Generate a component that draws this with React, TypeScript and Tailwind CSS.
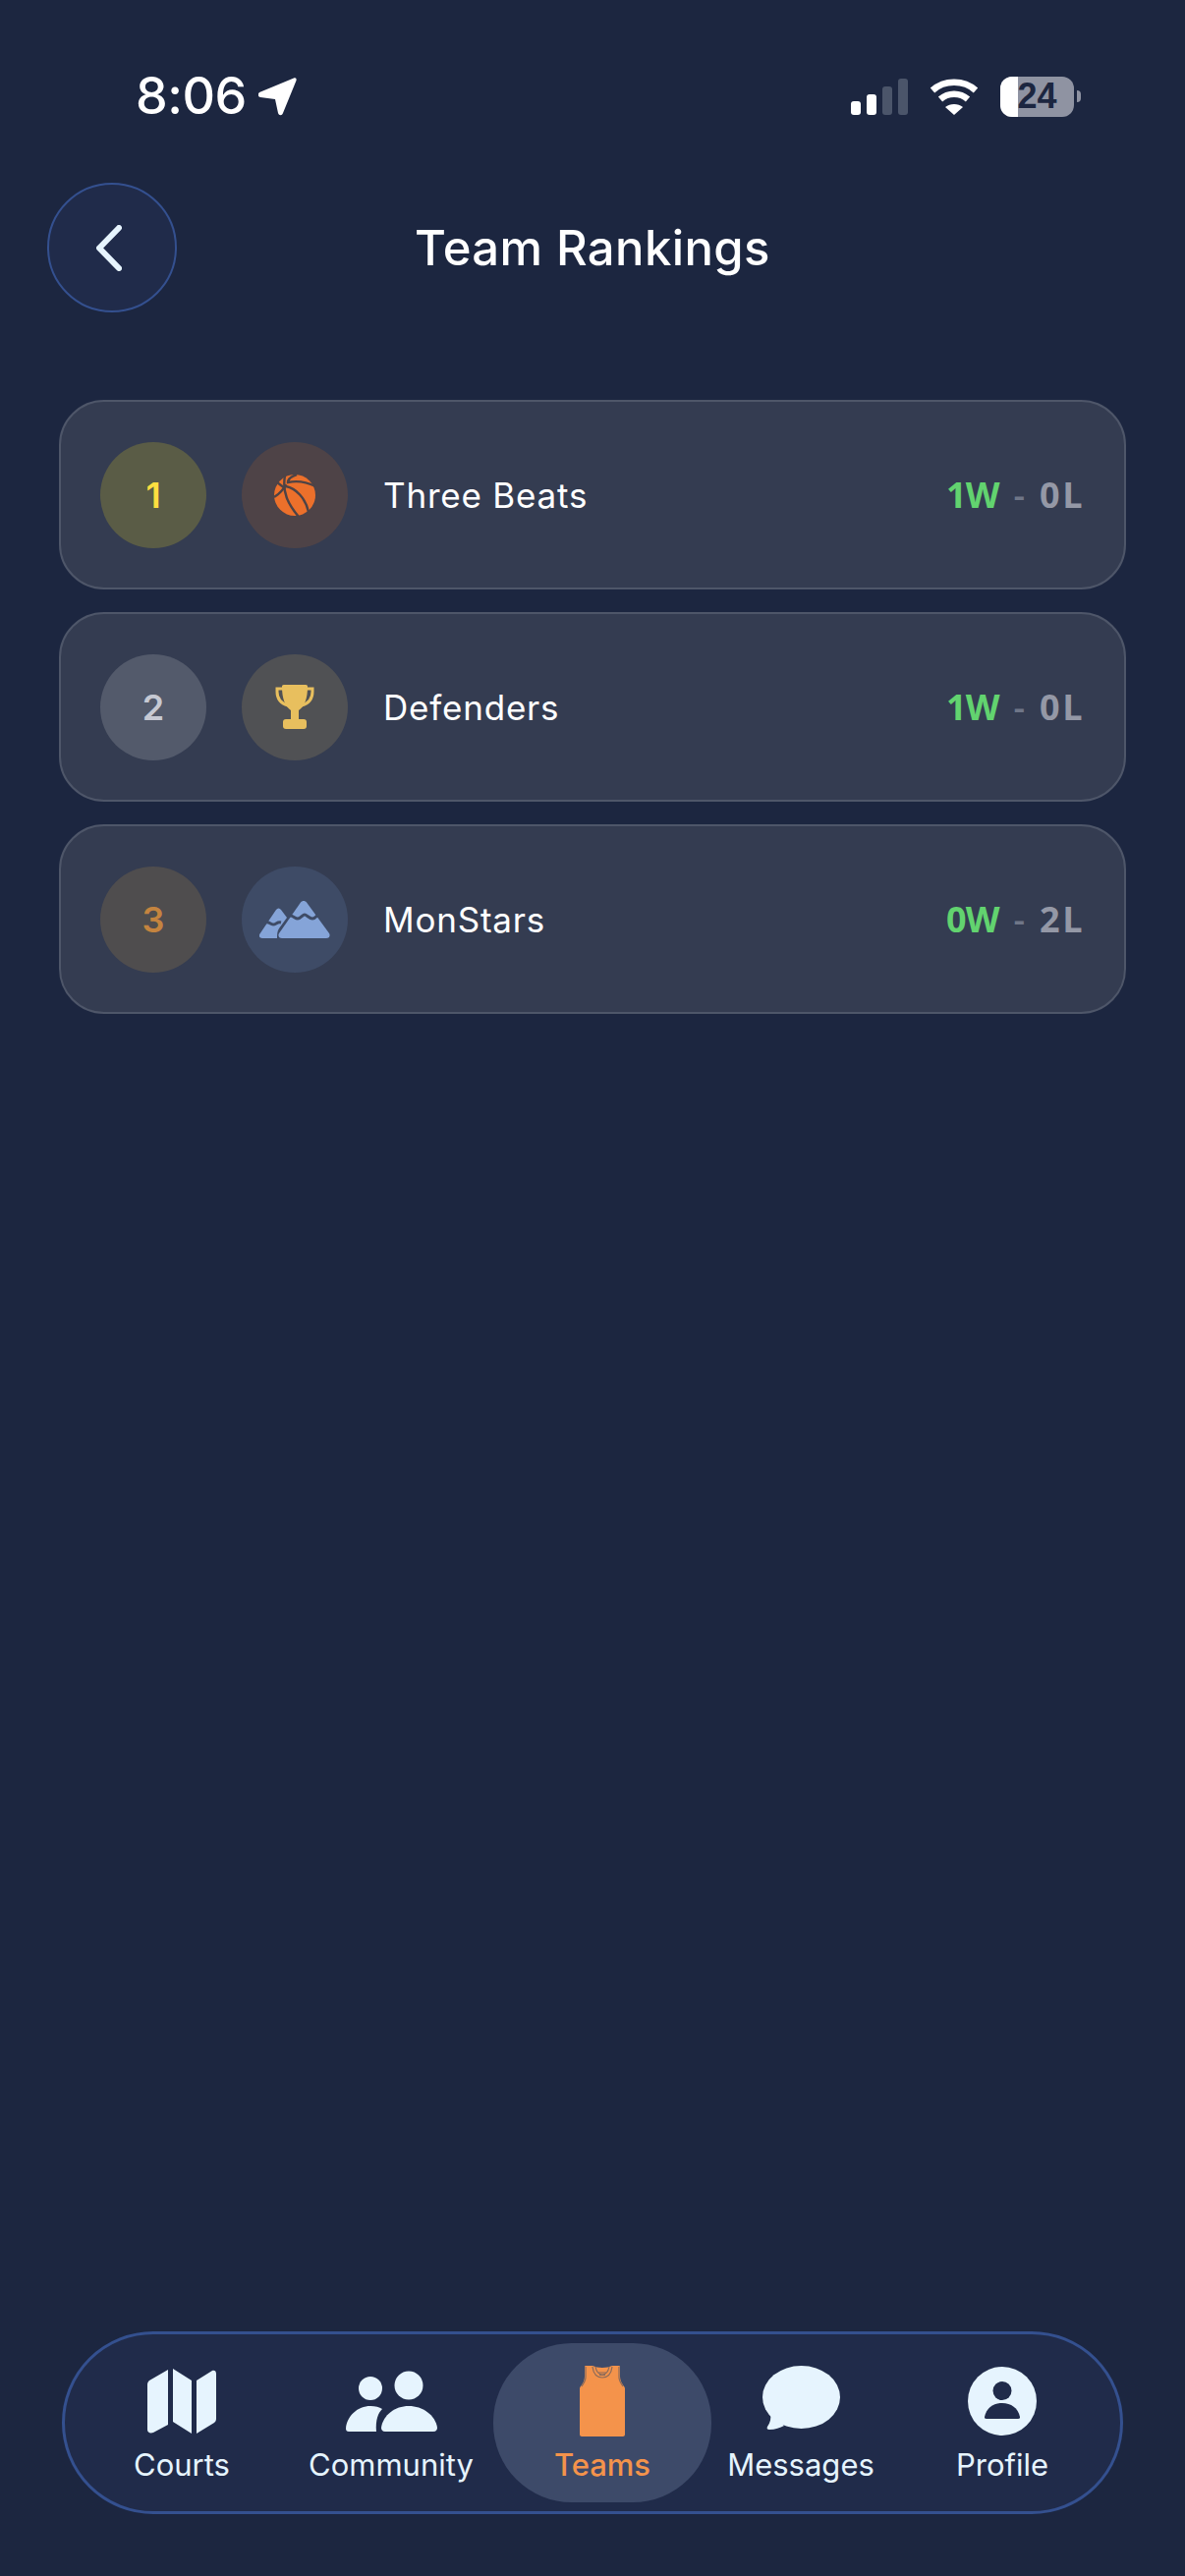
const F = "font-['Inter','Liberation_Sans',sans-serif]";

function Ball() {
  return (
    <svg viewBox="0 0 42 42" className="w-[42px] h-[42px]">
      <circle cx="21" cy="21" r="21" fill="#ec702b" />
      <g fill="none" stroke="#4d4346" strokeWidth="2.4">
        <path d="M11 1C8 18 14 30 25 43" />
        <path d="M23 0C17 2 14 5 14 8C24 6 34 8 42 12" />
        <path d="M12 12C22 14 32 24 35 38" />
        <path d="M0 23C5 20 9 16 12 10" />
        <path d="M3 8L11 14" />
      </g>
    </svg>
  );
}

function Trophy() {
  return (
    <svg viewBox="0 0 40 45" className="w-[40px] h-[45px]">
      <path d="M8 4H2v3c0 7 4 12 11 14M32 4h6v3c0 7-4 12-11 14" fill="none" stroke="#e8bf5e" strokeWidth="3" strokeLinecap="round" />
      <path d="M9 0h22c2 0 2 1 2 2 0 12-3 20-9 24v10h-8V26C10 22 7 14 7 2c0-1 0-2 2-2z" fill="#e8bf5e" />
      <rect x="8" y="35" width="24" height="10" rx="3" fill="#e8bf5e" />
    </svg>
  );
}

function Mountains() {
  return (
    <svg viewBox="0 0 72 38" className="w-[72px] h-[38px]">
      <path d="M17 9c1.500-2 3.500-2 5 0l6 8-8 11c-2 3-2 6-2 10H3c-3 0-4-2.500-2.500-4.500z" fill="#85a4d8" />
      <path d="M42 1.500c1.500-2 4.500-2 6 0L71 33c1.500 2.500 0 5-3 5H23c-3 0-4.500-2.500-3-5z" fill="#85a4d8" />
      <path d="M7 22c3-1 4 2 7 2s4-3 8-2" fill="none" stroke="#3e4b66" strokeWidth="3" />
      <path d="M31 15c4 0 5 3 8 3s5-4 7-4 5 4 8 4 4-3 6-4" fill="none" stroke="#3e4b66" strokeWidth="3" />
    </svg>
  );
}

function Jersey() {
  return (
    <svg viewBox="0 0 46 72" className="w-[46px] h-[72px]">
      <path d="M6 0h7c3 1 6 2 10 2s7-1 10-2h7c1 0 1 1 1 1v10c0 4 2 7 4 10 1 1 1 2 1 3v46c0 1-1 2-2 2H2c-1 0-2-1-2-2V24c0-1 0-2 1-3 2-3 4-6 4-10V1c0 0 0-1 1-1z" fill="#f4934b" />
      <path d="M13 1c1 8 4 11 10 11s9-3 10-11M16 1c1 5 3 8 7 8s6-3 7-8M19 7h8M20 9.500h6M6 1v11c0 3-2 6-4 9M40 1v11c0 3 2 6 4 9" fill="none" stroke="#8a6a5a" strokeWidth="1.200" />
    </svg>
  );
}

const teams = [
  { rank: "1", rankBg: "bg-[#5a5c46]", rankText: "text-[#ffdf40]", iconBg: "bg-[#4e4347]", icon: <Ball />, name: "Three Beats", w: "1W", l: "0L" },
  { rank: "2", rankBg: "bg-[#535a6b]", rankText: "text-[#c6c9d3]", iconBg: "bg-[#505154]", icon: <Trophy />, name: "Defenders", w: "1W", l: "0L" },
  { rank: "3", rankBg: "bg-[#4f4d4e]", rankText: "text-[#c4843f]", iconBg: "bg-[#3e4b66]", icon: <Mountains />, name: "MonStars", w: "0W", l: "2L" },
];

function NavItem({ icon, label, active, cls }: { icon: React.ReactNode; label: string; active?: boolean; cls: string }) {
  return (
    <div className={`h-[162px] pt-[3px] flex flex-col items-center justify-center shrink-0 ${cls} ${active ? "bg-[#3d4a69] rounded-[80px]" : ""}`}>
      <div className="h-[72px] flex items-center justify-center">{icon}</div>
      <span className={`text-[31px] leading-[38px] mt-[10px] whitespace-nowrap ${active ? "text-[#f4934b] font-medium" : "text-[#e6f4fe]"}`}>{label}</span>
    </div>
  );
}

export default function App() {
  return (
    <div className={`${F} w-[1206px] h-[2622px] bg-[#1c2640] text-white flex flex-col overflow-hidden`}>
      <div className="h-[186px] flex items-start justify-between pl-[138px] pr-[106px] pt-[70px] shrink-0">
        <div className="flex items-center gap-[12px]">
          <span className="text-[52px] leading-[56px] font-medium tracking-[-0.5px]">8:06</span>
          <svg viewBox="0 0 39 39" className="w-[39px] h-[39px]" fill="#fff">
            <path d="M36 .5c2-1 3 .5 2.500 2.500L25 36c-1 3-4 3-5 0l-3-14-15-2c-3-1-3-3-1-5z" />
          </svg>
        </div>
        <div className="flex items-center gap-[22px] h-[56px]">
          <svg viewBox="0 0 58 37" className="w-[58px] h-[37px]">
            <rect x="0" y="23" width="10" height="14" rx="3" fill="#fff" />
            <rect x="16" y="16" width="10" height="21" rx="3" fill="#fff" />
            <rect x="32" y="8" width="10" height="29" rx="3" fill="#4b556a" />
            <rect x="48" y="0" width="10" height="37" rx="3" fill="#4b556a" />
          </svg>
          <svg viewBox="0 0 50 37" className="w-[50px] h-[37px]" fill="none">
            <path d="M3 12C15 1 35 1 47 12" stroke="#fff" strokeWidth="6.500" />
            <path d="M11 21C19 14 31 14 39 21" stroke="#fff" strokeWidth="6.500" />
            <path d="M16 29c5-4 13-4 18 0l-9 8z" fill="#fff" />
          </svg>
          <div className="flex items-center">
            <div className="relative w-[75px] h-[41px] rounded-[12px] bg-[#8f93a2] overflow-hidden flex items-center justify-center">
              <div className="absolute left-0 top-0 bottom-0 w-[18px] bg-white" />
              <span className="relative text-[#1c2640] text-[36px] leading-none font-bold font-['Liberation_Sans',sans-serif]">24</span>
            </div>
            <div className="w-[4px] h-[12px] ml-[3px] rounded-r-full bg-[#8f93a2]" />
          </div>
        </div>
      </div>

      <div className="relative flex items-center justify-center h-[132px] shrink-0">
        <div className="absolute left-[48px] top-0 w-[132px] h-[132px] rounded-full bg-[#202b4a] border-[2px] border-[#34508f] flex items-center justify-center">
          <svg viewBox="0 0 26 47" className="w-[26px] h-[47px] mr-[6px]" fill="none" stroke="#e6f4fe" strokeWidth="6" strokeLinecap="round" strokeLinejoin="round">
            <path d="M23 3L3 23.500 23 44" />
          </svg>
        </div>
        <h1 className="text-[49px] leading-[60px] font-medium tracking-[0.4px] pt-[2px]">Team Rankings</h1>
      </div>

      <div className="mt-[89px] px-[60px] flex flex-col gap-[23px] shrink-0">
        {teams.map((t) => (
          <div key={t.rank} className="h-[193px] rounded-[46px] bg-[#343c51] border-[2px] border-[#4e5669] flex items-center pl-[40px] pr-[40px]">
            <div className={`w-[108px] h-[108px] rounded-full flex items-center justify-center ${t.rankBg} ${t.rankText} text-[36px] font-semibold`}>{t.rank}</div>
            <div className={`ml-[36px] w-[108px] h-[108px] rounded-full flex items-center justify-center ${t.iconBg}`}>{t.icon}</div>
            <span className="ml-[36px] flex-1 text-[35px] tracking-[0.8px] leading-[44px]">{t.name}</span>
            <div className="flex items-center text-[36px] font-bold font-['Open_Sans',sans-serif]">
              <span className="text-[#62d36f] tracking-[-1px]">{t.w}</span>
              <span className="text-[#6f7688] mx-[15px] font-semibold">-</span>
              <span className="text-[#9498a6] tracking-[2.5px]">{t.l}</span>
            </div>
          </div>
        ))}
      </div>

      <div className="mt-auto mb-[63px] mx-[63px] h-[186px] rounded-full bg-[#202b4a] border-[3px] border-[#34508f] flex items-center shrink-0 pl-[44px]">
        <NavItem cls="w-[150px]" label="Courts" icon={
          <svg viewBox="0 0 70 66" className="w-[70px] h-[66px]" fill="#e6f4fe">
            <path d="M0 16c0-2 1-3 2-4L21 1v56L6 65c-3 1-6 0-6-3zM26 0l19 12v54L26 54zM50 12L66 2c2-1 4 0 4 3v46c0 2-1 3-2 4L50 66z" />
          </svg>
        } />
        <NavItem cls="w-[168px] ml-[54px]" label="Community" icon={
          <svg viewBox="0 0 93 62" className="w-[93px] h-[62px]" fill="#e6f4fe">
            <circle cx="25" cy="18" r="12" />
            <circle cx="64" cy="15" r="14.500" />
            <path d="M3 62c-2 0-3-1-3-3C1 46 12 36 25 36c5 0 9 1 12 3-4 4-7 11-6 23z" />
            <path d="M40 62c-3 0-4-2-4-4C38 45 50 36 64 36s27 9 29 22c0 2-1 4-4 4z" />
          </svg>
        } />
        <NavItem active cls="w-[222px] ml-[20px]" label="Teams" icon={<Jersey />} />
        <NavItem cls="w-[150px] ml-[16px]" label="Messages" icon={
          <svg viewBox="0 0 79 66" className="w-[79px] h-[66px] -mt-[6px]" fill="#e6f4fe">
            <ellipse cx="39.500" cy="32" rx="39.500" ry="32" />
            <path d="M8 48c1 5 0 10-3 14-1 2 0 3 2 3 6 0 11-2 15-4z" />
          </svg>
        } />
        <NavItem cls="w-[110px] ml-[75px]" label="Profile" icon={
          <svg viewBox="0 0 70 70" className="w-[70px] h-[70px]">
            <circle cx="35" cy="35" r="35" fill="#e6f4fe" />
            <circle cx="35" cy="24.500" r="9.500" fill="#202b4a" />
            <path d="M19 53c-2 0-2-1-2-2 2-9 9-14 18-14s16 5 18 14c0 1 0 2-2 2z" fill="#202b4a" />
          </svg>
        } />
      </div>
    </div>
  );
}
